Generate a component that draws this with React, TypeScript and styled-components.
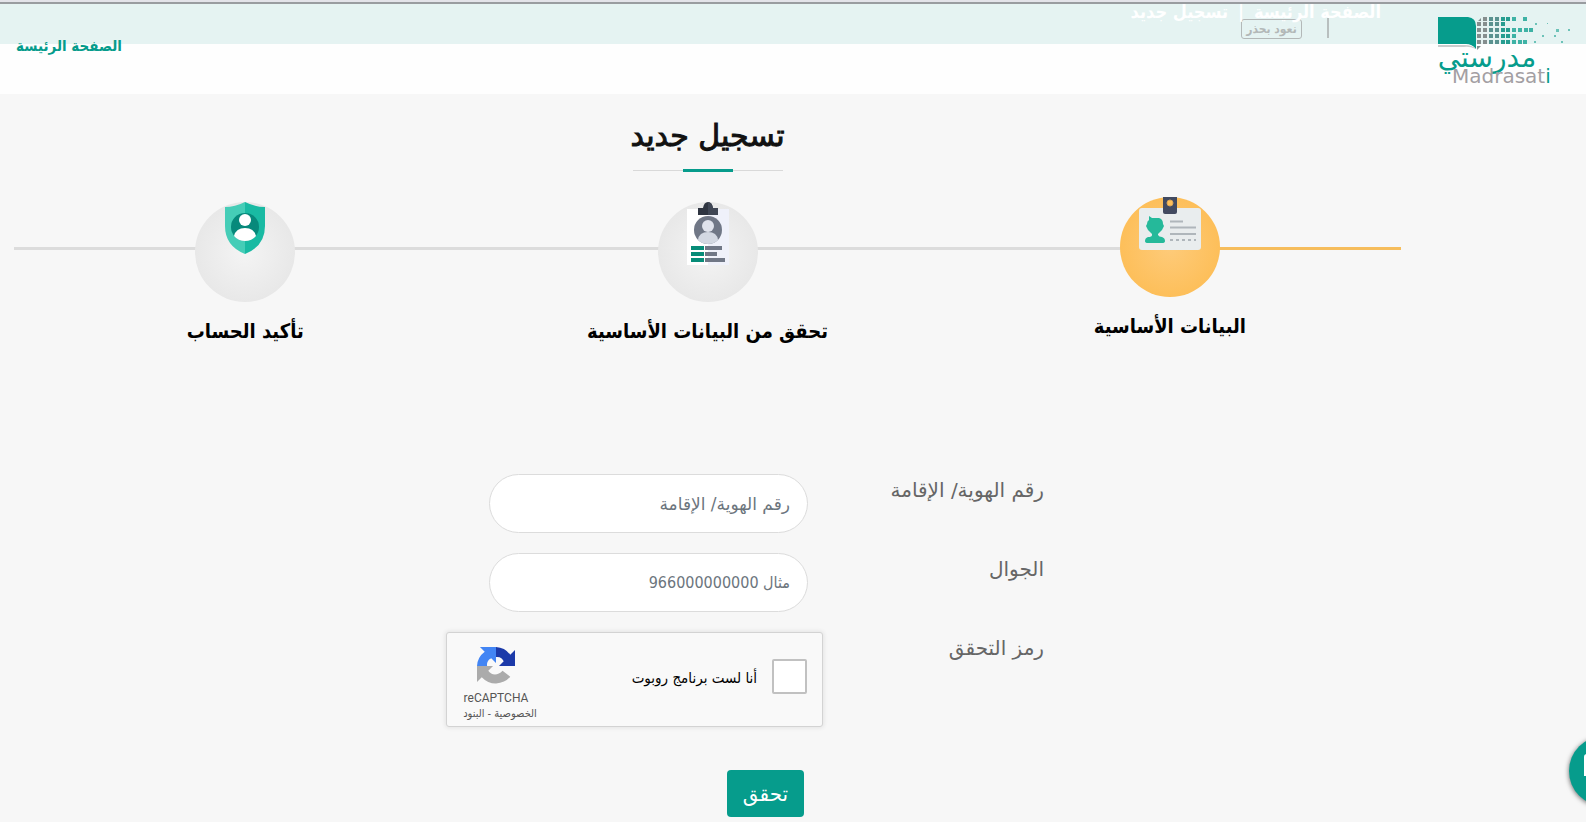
import React from "react";
import styled, { createGlobalStyle, css } from "styled-components";

const teal = "#069c8c";
const arabic = `"DejaVu Sans", sans-serif`;
const arabicCondensed = `"DejaVu Sans Condensed", "DejaVu Sans", sans-serif`;

const condensed = css`
  font-family: ${arabicCondensed};
  font-stretch: condensed;
`;

const GlobalStyle = createGlobalStyle`
  *, *::before, *::after { box-sizing: border-box; }
  body {
    margin: 0;
    background: #f7f7f7;
    font-family: ${arabic};
    color: #111;
  }
`;

const Page = styled.div`
  min-height: 100vh;
`;

const WindowEdge = styled.div`
  height: 4px;
  background: #e3e3e9;
  border-bottom: 2px solid #999ca0;
`;

const Header = styled.header`
  position: relative;
  display: flex;
  align-items: flex-start;
  height: 90px;
  padding: 12px 16px;
  background: linear-gradient(#e5f3f2 40px, #fefefe 40px);
`;

const LogoLink = styled.a`
  display: block;
  width: 132px;
  height: 70px;
`;

const Divider = styled.span`
  width: 2px;
  height: 22px;
  margin-inline-start: 109px;
  background: #b8bfbf;
`;

const Notice = styled.span`
  ${condensed}
  display: flex;
  align-items: center;
  justify-content: center;
  width: 61px;
  height: 20px;
  margin-top: 3px;
  margin-inline-start: 25px;
  border: 1px solid #b3b8b8;
  border-radius: 3px;
  color: #b3b8b8;
  font-size: 12px;
  font-weight: 700;
  white-space: nowrap;
`;

const Breadcrumb = styled.nav`
  ${condensed}
  position: absolute;
  top: -4px;
  right: 205px;
  display: flex;
  gap: 10px;
  color: #fff;
  font-size: 18px;
  line-height: 24px;
  font-weight: 700;
  white-space: nowrap;

  a {
    color: inherit;
    text-decoration: none;
  }
`;

const HomeLink = styled.a`
  ${condensed}
  margin-top: 18px;
  margin-inline-start: auto;
  color: ${teal};
  font-size: 15px;
  line-height: 24px;
  font-weight: 700;
  text-decoration: none;
`;

const Main = styled.main`
  padding: 20px 185px 4px 14px;
`;

const TitleBlock = styled.div`
  display: flex;
  flex-direction: column;
  align-items: center;
`;

const Title = styled.h1`
  margin: 0;
  font-size: 30px;
  line-height: 44px;
  font-weight: 400;
  -webkit-text-stroke: 1px #111;
`;

const TitleRule = styled.div`
  width: 150px;
  height: 3px;
  margin-top: 11px;
  background:
    linear-gradient(${teal}, ${teal}) center / 50px 3px no-repeat,
    linear-gradient(#d9d9d9, #d9d9d9) center / 100% 1px no-repeat;
`;

const Steps = styled.ol`
  display: grid;
  grid-template-columns: repeat(3, 1fr);
  margin: 25px 0 0;
  padding: 0;
  list-style: none;
`;

const Step = styled.li<{ $active?: boolean }>`
  display: flex;
  flex-direction: column;
  align-items: center;
  height: 160px;
  padding-top: ${(p) => (p.$active ? 0 : 5)}px;
  background:
    ${(p) =>
      p.$active
        ? css`linear-gradient(#f6bd5c, #f6bd5c) right 50px / 50% 3px no-repeat,`
        : ""}
    linear-gradient(#dcdcdc, #dcdcdc) left 50px / 100% 3px no-repeat;
`;

const StepCircle = styled.div<{ $active?: boolean }>`
  display: flex;
  justify-content: center;
  width: 100px;
  height: 100px;
  border-radius: 50%;
  background: ${(p) =>
    p.$active
      ? "radial-gradient(circle, #fecb7a, #fdbf5a 70%)"
      : "radial-gradient(circle, #f4f4f4, #e8e8e8 70%)"};
`;

const StepLabel = styled.span`
  ${condensed}
  margin-top: 14px;
  color: #000;
  font-size: 20px;
  line-height: 30px;
  font-weight: 700;
  white-space: nowrap;
`;

const Form = styled.form`
  display: flex;
  flex-direction: column;
  gap: 20px;
  margin-top: 117px;
  padding-inline-start: 357px;
`;

const Row = styled.div`
  display: grid;
  grid-template-columns: 221px 377px;
  align-items: start;
`;

const Label = styled.label`
  color: #666;
  font-size: 20px;
  line-height: 32px;
`;

const TextInput = styled.input<{ $numeric?: boolean }>`
  width: 319px;
  height: 59px;
  margin: 0 15px;
  padding: 0 17px;
  border: 1px solid #dcdcdc;
  border-radius: 30px;
  background: #fff;
  color: #495057;
  font-family: ${arabic};
  font-size: 17px;
  ${(p) =>
    p.$numeric &&
    css`
      ${condensed}
      font-size: 16px;
    `}

  &::placeholder {
    color: #6c757d;
    opacity: 1;
  }
`;

const Captcha = styled.div`
  display: flex;
  align-items: center;
  height: 95px;
  padding-inline: 15px 5px;
  border: 1px solid #d3d3d3;
  border-radius: 3px;
  background: #f9f9f9;
  box-shadow: 0 0 4px 1px rgba(0, 0, 0, 0.08);
`;

const CaptchaCheck = styled.input`
  appearance: none;
  width: 35px;
  height: 35px;
  margin: 0 0 6px;
  border: 2px solid #c1c1c1;
  border-radius: 2px;
  background: #fff;
`;

const CaptchaLabel = styled.label`
  ${condensed}
  margin-inline-start: 15px;
  padding-bottom: 4px;
  color: #000;
  font-size: 15px;
  white-space: nowrap;
`;

const CaptchaBrand = styled.div`
  display: flex;
  flex-direction: column;
  align-items: center;
  width: 88px;
  margin-inline-start: auto;
  padding-top: 9px;
  color: #555;
  font-family: Roboto, sans-serif;
  font-size: 12px;
  line-height: 16px;
`;

const CaptchaName = styled.span`
  margin-top: 5px;
`;

const CaptchaTerms = styled.div`
  margin-inline-end: 8px;
  font-family: ${arabicCondensed};
  font-size: 11px;
  white-space: nowrap;

  a {
    color: inherit;
    text-decoration: none;
  }
`;

const Submit = styled.button`
  width: 77px;
  height: 47px;
  margin-top: 23px;
  margin-inline-start: 240px;
  padding: 0;
  border: 0;
  border-radius: 4px;
  background: ${teal};
  color: #fff;
  font-family: ${arabic};
  font-size: 20px;
`;

const ChatButton = styled.button`
  position: fixed;
  right: -53px;
  bottom: 16px;
  display: flex;
  align-items: center;
  width: 70px;
  height: 70px;
  padding: 0 15px;
  border: 0;
  border-radius: 50%;
  background: ${teal};
  box-shadow: 0 1px 5px rgba(0, 0, 0, 0.6);
`;

const dotRows: { y: number; xs: number[] }[] = [
  { y: 1, xs: [45, 51, 57, 63, 68, 74, 85] },
  { y: 6, xs: [39, 45, 51, 57, 63] },
  { y: 12, xs: [39, 45, 51, 57, 63, 68, 74, 80, 86, 91] },
  { y: 18, xs: [39, 45, 51, 57, 63, 68, 74] },
  { y: 24, xs: [39, 45, 51, 57, 63, 68, 74, 80, 85] },
];
const looseDots = [
  [97, 7, 2], [109, 7, 1], [118, 13, 3], [130, 13, 2],
  [104, 19, 2], [116, 19, 2], [96, 25, 2], [123, 25, 2],
];

const dotColor = (x: number) => (x < 50 ? "#858e8e" : x < 62 ? "#5a9290" : x < 74 ? "#269d90" : "#3eb2a5");

const Logo = () => (
  <svg width="132" height="70" viewBox="0 0 132 70" role="img" aria-label="مدرستي" overflow="visible">
    <path d="M0 29H27Q34 29 38 33Q31 30 26 31H0Z" fill="#c9cccc" />
    <path d="M0 1H30Q38 2 38 10V33Q34 28 28 28H0Z" fill={teal} />
    {dotRows.map((row) =>
      row.xs.map((x) => (
        <rect key={`${x}-${row.y}`} x={x} y={row.y} width="4" height="4" fill={dotColor(x)} />
      ))
    )}
    <path d="M40 5l3-3v3zM39 30h4l-4 4z" fill="#858e8e" />
    {looseDots.map(([x, y, s]) => (
      <rect key={`${x}-${y}`} x={x} y={y} width={s} height={s} fill="#6cc2b8" />
    ))}
    <text x="49" y="51" textAnchor="middle" direction="rtl" fontFamily={arabic} fontSize="28" fill={teal}>
      مدرستي
    </text>
    <text x="14" y="67" direction="ltr" fontFamily={arabic} fontSize="20" fill="#a39fa3">
      Madrasat<tspan fill={teal}>i</tspan>
    </text>
  </svg>
);

const IdBadgeIcon = () => (
  <svg width="62" height="53" viewBox="0 0 62 53" aria-hidden="true">
    <rect y="11" width="62" height="42" rx="3" fill="#e9edee" />
    <path d="M24 0h14v15q0 2-2 2H26q-2 0-2-2z" fill="#424a60" />
    <circle cx="31" cy="6" r="3" fill="#fdbf5a" stroke="#dba557" />
    <path d="M10 19l3 2h7q4 1 4 6l1 2-2 4-4 4v1q1 2 4 2 3 1 3 4 0 2-3 2H9q-3 0-3-2 0-3 3-4 4 0 4-2v-1l-4-4-2-4 1-2q0-3 2-4z" fill="#25b99a" />
    <path d="M31 24.500h13M31 30.500h26M31 37h26" stroke="#afb6bb" strokeWidth="2" />
    <path d="M31 43h26" stroke="#afb6bb" strokeWidth="2" strokeDasharray="3 3" />
  </svg>
);

const ClipboardIcon = () => (
  <svg width="42" height="63" viewBox="0 0 42 63" aria-hidden="true">
    <path d="M0 7h21v56H0z" fill="#fff" />
    <path d="M21 7h21v56H21z" fill="#eff1fa" />
    <path d="M11 6h5q1-6 5-6t5 6h5v7H11z" fill="#2f3541" />
    <path d="M21 0q4 0 5 6h5v7H21z" fill="#3f4654" />
    <circle cx="21" cy="28" r="14" fill="#707786" />
    <circle cx="21" cy="24" r="6" fill="#e0e3ec" />
    <path d="M11 38q1-8 10-8t10 8q-4 4-10 4t-10-4z" fill="#d3d8e2" />
    <path d="M4 46h13M4 52h13M4 58h13" stroke="#078c78" strokeWidth="4" />
    <path d="M18 46h17M18 52h12M18 58h20" stroke="#707786" strokeWidth="4" />
  </svg>
);

const ShieldIcon = () => (
  <svg width="40" height="52" viewBox="0 0 40 52" aria-hidden="true">
    <path d="M20 0Q10 5 0 5v19q0 20 20 28z" fill="#45cdb7" />
    <path d="M20 0q10 5 20 5v19q0 20-20 28z" fill="#19baa3" />
    <circle cx="20" cy="25" r="14" fill="#07897b" />
    <circle cx="20" cy="18" r="6" fill="#fff" />
    <path d="M9 34q2-8 11-8t11 8q-4 5-11 5T9 34z" fill="#fff" />
  </svg>
);

const RecaptchaIcon = () => (
  <svg width="38" height="38" viewBox="0 0 64 64" aria-hidden="true">
    <path d="M64 32V5l-8 8A32 32 0 0 0 32 0v17c7-1 11 3 13 7l-8 8z" fill="#1c3aa9" />
    <path d="M32 0H5l8 8A32 32 0 0 0 0 32h17c-1-7 3-11 7-13l8 8z" fill="#4285f4" />
    <path d="M0 32v27l8-8a32 32 0 0 0 48-1L43 40c-8 9-19 8-24 0l8-8z" fill="#ababab" />
  </svg>
);

const steps = [
  { label: "البيانات الأساسية", Icon: IdBadgeIcon, active: true },
  { label: "تحقق من البيانات الأساسية", Icon: ClipboardIcon, active: false },
  { label: "تأكيد الحساب", Icon: ShieldIcon, active: false },
];

export default function App() {
  return (
    <Page dir="rtl" lang="ar">
      <GlobalStyle />
      <WindowEdge />
      <Header>
        <LogoLink href="#"><Logo /></LogoLink>
        <Breadcrumb>
          <a href="#">الصفحة الرئيسة</a>
          <span>|</span>
          <span>تسجيل جديد</span>
        </Breadcrumb>
        <Divider />
        <Notice>نعود بحذر</Notice>
        <HomeLink href="#">الصفحة الرئيسة</HomeLink>
      </Header>
      <Main>
        <TitleBlock>
          <Title>تسجيل جديد</Title>
          <TitleRule />
        </TitleBlock>
        <Steps>
          {steps.map(({ label, Icon, active }) => (
            <Step key={label} $active={active}>
              <StepCircle $active={active}><Icon /></StepCircle>
              <StepLabel>{label}</StepLabel>
            </Step>
          ))}
        </Steps>
        <Form onSubmit={(e) => e.preventDefault()}>
          <Row>
            <Label htmlFor="identity">رقم الهوية/ الإقامة</Label>
            <TextInput id="identity" placeholder="رقم الهوية/ الإقامة" />
          </Row>
          <Row>
            <Label htmlFor="mobile">الجوال</Label>
            <TextInput id="mobile" $numeric placeholder="مثال 966000000000" />
          </Row>
          <Row>
            <Label htmlFor="robot">رمز التحقق</Label>
            <Captcha>
              <CaptchaCheck id="robot" type="checkbox" />
              <CaptchaLabel htmlFor="robot">أنا لست برنامج روبوت</CaptchaLabel>
              <CaptchaBrand>
                <RecaptchaIcon />
                <CaptchaName>reCAPTCHA</CaptchaName>
                <CaptchaTerms>
                  <a href="#">الخصوصية</a> - <a href="#">البنود</a>
                </CaptchaTerms>
              </CaptchaBrand>
            </Captcha>
          </Row>
          <Submit type="submit">تحقق</Submit>
        </Form>
      </Main>
      <ChatButton type="button" aria-label="محادثة">
        <svg width="40" height="34" viewBox="0 0 40 34" fill="none" stroke="#fff" strokeWidth="2" aria-hidden="true">
          <path d="M37 1H3Q1 1 1 3v18h8v8l8-8h20z" />
        </svg>
      </ChatButton>
    </Page>
  );
}
